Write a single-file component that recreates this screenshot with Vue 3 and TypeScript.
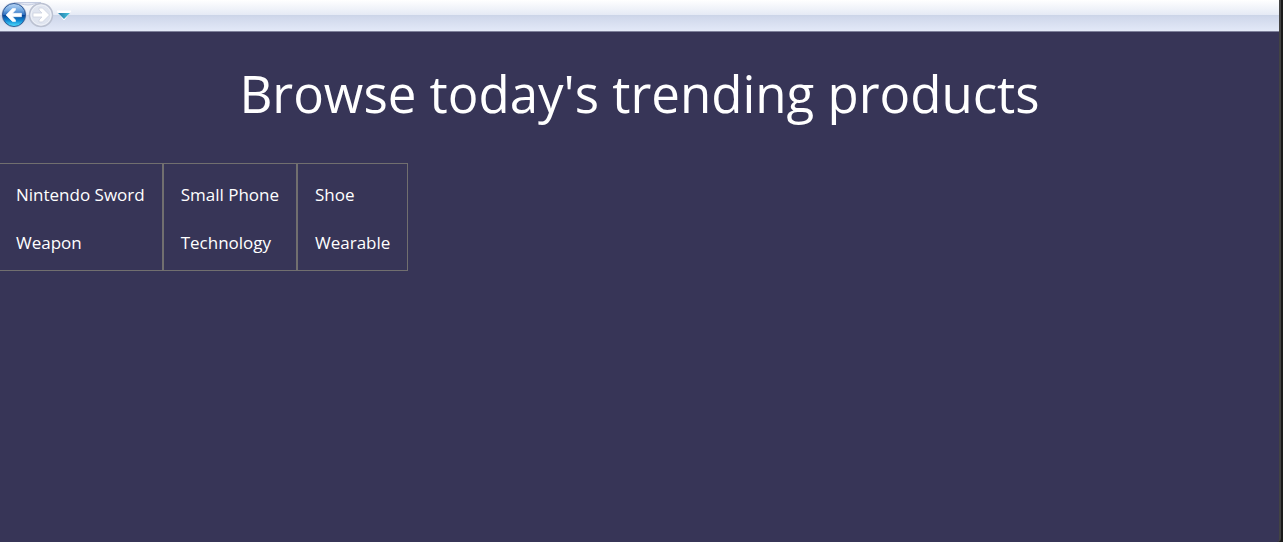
<script setup lang="ts">
interface Product {
  name: string
  category: string
}

const products: Product[] = [
  { name: 'Nintendo Sword', category: 'Weapon' },
  { name: 'Small Phone', category: 'Technology' },
  { name: 'Shoe', category: 'Wearable' },
]
</script>

<template>
  <div class="window">
    <nav class="toolbar" aria-label="Navigation">
      <div class="history">
        <svg class="tray" viewBox="0 0 54 30" aria-hidden="true">
          <path d="M14 2.500H41C35 3 33 5 28 5S20 3 14 2.500Z" fill="#e3e8f4" stroke="#c3cbe0" />
        </svg>
        <button class="nav-button" type="button" aria-label="Back">
          <svg viewBox="0 0 26 26" aria-hidden="true">
            <defs>
              <linearGradient id="back-fill" x1="0" y1="0" x2="0" y2="1">
                <stop offset="0" stop-color="#b9d5f4" />
                <stop offset=".3" stop-color="#6fa6e0" />
                <stop offset=".48" stop-color="#2f70c0" />
                <stop offset=".52" stop-color="#084799" />
                <stop offset=".75" stop-color="#118bd6" />
                <stop offset="1" stop-color="#53e4ff" />
              </linearGradient>
            </defs>
            <circle cx="13" cy="13" r="12.500" fill="#c3cbdc" />
            <circle cx="13" cy="13" r="11.500" fill="url(#back-fill)" stroke="#315b99" />
            <path d="M5 13 11.500 6.500H14.500V8L11.500 11.300H20.500V14.700H11.500L14.500 18V19.500H11.500Z" fill="#fff" stroke="#fff" stroke-width=".6" stroke-linejoin="round" />
          </svg>
        </button>
        <button class="nav-button" type="button" aria-label="Forward" disabled>
          <svg viewBox="0 0 26 26" aria-hidden="true">
            <circle cx="13" cy="13" r="11.500" fill="#e0e5f0" stroke="#bbc1d1" stroke-width="1.500" />
            <circle cx="13" cy="13" r="10" fill="none" stroke="#eef1f8" />
            <path d="M21.500 13 14.500 6H11V8L14 11H5V15H14L11 18V20H14.500Z" fill="#fff" stroke="#cdd2df" stroke-width=".8" stroke-linejoin="round" />
          </svg>
        </button>
        <button class="menu-button" type="button" aria-label="Recent pages">
          <svg viewBox="0 0 16 12" aria-hidden="true">
            <defs>
              <linearGradient id="menu-fill">
                <stop offset="0" stop-color="#2478a6" />
                <stop offset="1" stop-color="#45c6df" />
              </linearGradient>
            </defs>
            <path d="M1 2H15L8 11Z" fill="#fff" stroke="#fff" stroke-linejoin="round" />
            <path d="M2 4H14L8 10Z" fill="url(#menu-fill)" />
          </svg>
        </button>
      </div>
    </nav>
    <main>
      <h1>Browse today's trending products</h1>
      <ul class="products">
        <li v-for="product in products" :key="product.name" class="product">
          <p>{{ product.name }}</p>
          <p>{{ product.category }}</p>
        </li>
      </ul>
    </main>
  </div>
</template>

<style>
body {
  background: #1b1b1b;
}
</style>

<style scoped>
.window {
  box-sizing: border-box;
  min-height: 100vh;
  margin-right: 2px;
  border-right: 2px solid #434343;
  border-bottom-right-radius: 4px;
  background: #373557;
  color: #fff;
  font-family: "Segoe UI", "Open Sans", sans-serif;
}

.toolbar {
  box-sizing: border-box;
  height: 32px;
  border-bottom: 1px solid #7e809b;
  background: linear-gradient(#fff 0, #e5eaf5 15px, #cbd4e7 15px, #d0d8eb 17px, #e3e9f8 31px);
}

.history {
  display: flex;
  align-items: center;
  gap: 1px;
  height: 30px;
  padding-left: 1px;
  position: relative;
}

.tray {
  position: absolute;
  left: 0;
  top: 0;
  width: 54px;
  height: 30px;
}

button {
  position: relative;
  padding: 0;
  border: 0;
  background: none;
}

button svg {
  display: block;
  width: 100%;
  height: 100%;
}

.nav-button {
  width: 26px;
  height: 26px;
}

.menu-button {
  width: 16px;
  height: 12px;
  margin-left: 1px;
}

h1 {
  margin: 0;
  padding: 24px 0 32px;
  font-size: 51px;
  font-weight: 400;
  line-height: 75px;
  text-align: center;
}

.products {
  display: flex;
  margin: 0 0 0 -2px;
  padding: 0;
  list-style: none;
}

.product {
  padding: 7px 17px 3px;
  border: 1px solid #716f6f;
}

.product p {
  margin: 0;
  font-size: 17px;
  line-height: 48px;
}
</style>
